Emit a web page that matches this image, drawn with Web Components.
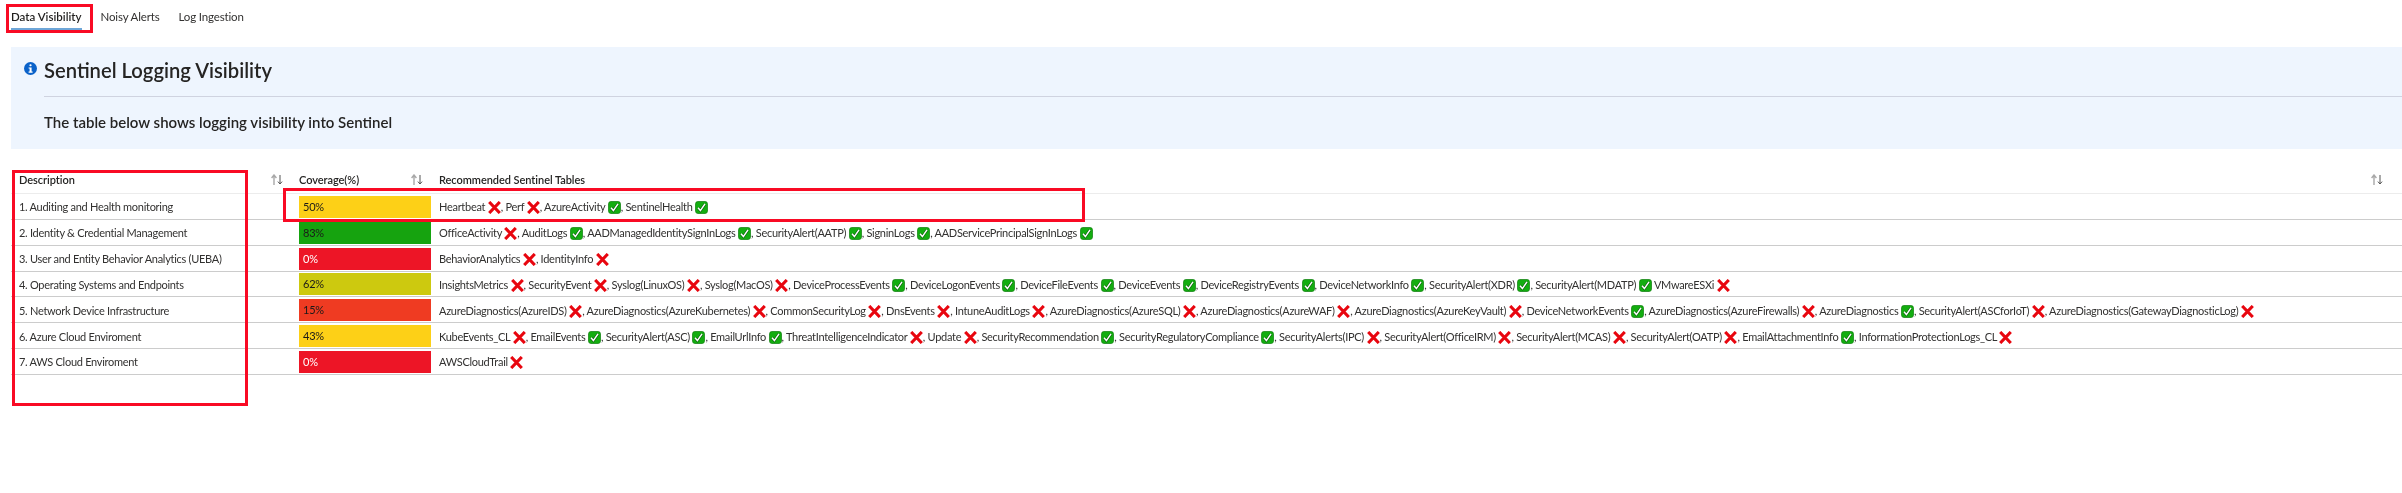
<!DOCTYPE html>
<html lang="en">
<head>
<meta charset="utf-8">
<title>Sentinel Logging Visibility</title>
<style>
  html, body { margin: 0; background: #fff; }
  body {
    position: relative;
    height: 493px;
    overflow: hidden;
    font-family: Lato, "Open Sans", sans-serif;
    color: #323130;
    filter: blur(0.35px);
  }
</style>
</head>
<body>
  <tab-bar>
    <tab-item active>Data Visibility</tab-item>
    <tab-item>Noisy Alerts</tab-item>
    <tab-item>Log Ingestion</tab-item>
  </tab-bar>

  <info-banner>
    <span slot="title">Sentinel Logging Visibility</span>
    The table below shows logging visibility into Sentinel
  </info-banner>

  <visibility-table>
    <visibility-row label="1. Auditing and Health monitoring" pct="50" color="#fdd017">Heartbeat <log-mark></log-mark>, Perf <log-mark></log-mark>, AzureActivity <log-mark ok></log-mark>, SentinelHealth <log-mark ok></log-mark></visibility-row>
    <visibility-row label="2. Identity &amp; Credential Management" pct="83" color="#16a30f">OfficeActivity <log-mark></log-mark>, AuditLogs <log-mark ok></log-mark>, AADManagedIdentitySignInLogs <log-mark ok></log-mark>, SecurityAlert(AATP) <log-mark ok></log-mark>, SigninLogs <log-mark ok></log-mark>, AADServicePrincipalSignInLogs <log-mark ok></log-mark></visibility-row>
    <visibility-row label="3. User and Entity Behavior Analytics (UEBA)" pct="0" color="#ed1526" light>BehaviorAnalytics <log-mark></log-mark>, IdentityInfo <log-mark></log-mark></visibility-row>
    <visibility-row label="4. Operating Systems and Endpoints" pct="62" color="#cdc90f">InsightsMetrics <log-mark></log-mark>, SecurityEvent <log-mark></log-mark>, Syslog(LinuxOS) <log-mark></log-mark>, Syslog(MacOS) <log-mark></log-mark>, DeviceProcessEvents <log-mark ok></log-mark>, DeviceLogonEvents <log-mark ok></log-mark>, DeviceFileEvents <log-mark ok></log-mark>, DeviceEvents <log-mark ok></log-mark>, DeviceRegistryEvents <log-mark ok></log-mark>, DeviceNetworkInfo <log-mark ok></log-mark>, SecurityAlert(XDR) <log-mark ok></log-mark>, SecurityAlert(MDATP) <log-mark ok></log-mark> VMwareESXi <log-mark></log-mark></visibility-row>
    <visibility-row label="5. Network Device Infrastructure" pct="15" color="#ef3b22">AzureDiagnostics(AzureIDS) <log-mark></log-mark>, AzureDiagnostics(AzureKubernetes) <log-mark></log-mark>, CommonSecurityLog <log-mark></log-mark>, DnsEvents <log-mark></log-mark>, IntuneAuditLogs <log-mark></log-mark>, AzureDiagnostics(AzureSQL) <log-mark></log-mark>, AzureDiagnostics(AzureWAF) <log-mark></log-mark>, AzureDiagnostics(AzureKeyVault) <log-mark></log-mark>, DeviceNetworkEvents <log-mark ok></log-mark>, AzureDiagnostics(AzureFirewalls) <log-mark></log-mark>, AzureDiagnostics <log-mark ok></log-mark>, SecurityAlert(ASCforIoT) <log-mark></log-mark>, AzureDiagnostics(GatewayDiagnosticLog) <log-mark></log-mark></visibility-row>
    <visibility-row label="6. Azure Cloud Enviroment" pct="43" color="#fdd017">KubeEvents_CL <log-mark></log-mark>, EmailEvents <log-mark ok></log-mark>, SecurityAlert(ASC) <log-mark ok></log-mark>, EmailUrlInfo <log-mark ok></log-mark>, ThreatIntelligenceIndicator <log-mark></log-mark>, Update <log-mark></log-mark>, SecurityRecommendation <log-mark ok></log-mark>, SecurityRegulatoryCompliance <log-mark ok></log-mark>, SecurityAlerts(IPC) <log-mark></log-mark>, SecurityAlert(OfficeIRM) <log-mark></log-mark>, SecurityAlert(MCAS) <log-mark></log-mark>, SecurityAlert(OATP) <log-mark></log-mark>, EmailAttachmentInfo <log-mark ok></log-mark>, InformationProtectionLogs_CL <log-mark></log-mark></visibility-row>
    <visibility-row label="7. AWS Cloud Enviroment" pct="0" color="#ed1526" light>AWSCloudTrail <log-mark></log-mark></visibility-row>
  </visibility-table>

  <red-callout style="left:6px;top:4px;width:87px;height:29px"></red-callout>
  <red-callout style="left:12px;top:170px;width:236px;height:236px"></red-callout>
  <red-callout style="left:283px;top:188px;width:802px;height:34px"></red-callout>

<script>
class TabBar extends HTMLElement {
  connectedCallback() {
    this.attachShadow({ mode: "open" });
    this.shadowRoot.innerHTML = `
      <style>
        :host { display: flex; gap: 19px; padding: 0 11px; height: 47px; align-items: flex-start; }
      </style>
      <slot></slot>
    `;
  }
}

class TabItem extends HTMLElement {
  connectedCallback() {
    this.attachShadow({ mode: "open" });
    this.shadowRoot.innerHTML = `
      <style>
        :host {
          display: block;
          font-size: 11.5px;
          letter-spacing: -0.15px;
          line-height: 17px;
          padding: 8px 0 3px;
          white-space: nowrap;
          border-bottom: 2px solid transparent;
        }
        :host([active]) {
          letter-spacing: 0;
          font-weight: 600;
          color: #201f1e;
          border-bottom-color: #6ea6d8;
        }
      </style>
      <slot></slot>
    `;
  }
}

class InfoBanner extends HTMLElement {
  connectedCallback() {
    this.attachShadow({ mode: "open" });
    this.shadowRoot.innerHTML = `
      <style>
        :host {
          display: grid;
          grid-template-columns: 33px 1fr;
          height: 102px;
          margin-left: 11px;
          background: #eef5fe;
        }
        .icon { padding: 15px 0 0 13px; }
        .icon svg { display: block; width: 13px; height: 13px; }
        .title {
          height: 50px;
          box-sizing: border-box;
          padding-top: 8px;
          border-bottom: 1px solid #cfd3e0;
          font-size: 20.2px;
          line-height: 30px;
          font-weight: 600;
          color: #252423;
        }
        .text {
          padding-top: 15px;
          font-size: 15px;
          line-height: 20px;
          font-weight: 600;
          color: #252423;
        }
      </style>
      <div class="icon">
        <svg viewBox="0 0 13 13"><circle cx="6.5" cy="6.5" r="6.5" fill="#0a62c9"/><rect x="5.4" y="2.3" width="2.2" height="2" rx="1" fill="#fff"/><path d="M4.6 5.4h3v4.2h1v1.1H4.6V9.6h1V6.5h-1z" fill="#fff"/></svg>
      </div>
      <div>
        <div class="title"><slot name="title"></slot></div>
        <div class="text"><slot></slot></div>
      </div>
    `;
  }
}

const SORT_ICON = `
  <svg viewBox="0 0 12 11" width="12" height="11" aria-hidden="true">
    <path d="M3 11V2M.6 4 3 1l2.4 3" fill="none" stroke="#a8a8a8" stroke-width="1.4"/>
    <path d="M9 1v9M6.9 7.6 9 10l2.1-2.4" fill="none" stroke="#555" stroke-width="1"/>
  </svg>`;

class VisibilityTable extends HTMLElement {
  connectedCallback() {
    this.attachShadow({ mode: "open" });
    this.shadowRoot.innerHTML = `
      <style>
        :host { display: block; margin: 18px 0 0 11px; }
        .head {
          display: grid;
          grid-template-columns: 280px 140px 1fr;
          height: 26px;
          border-bottom: 1px solid #ececec;
          font-size: 11px;
          letter-spacing: -0.05px;
          line-height: 22px;
          font-weight: 600;
          color: #252423;
        }
        .head > div {
          display: flex;
          justify-content: space-between;
          align-items: center;
          padding: 0 8px;
          white-space: nowrap;
        }
        .head > div:last-child { padding-right: 19px; }
        .head svg { margin-top: -1px; }
      </style>
      <div class="head">
        <div>Description${SORT_ICON}</div>
        <div>Coverage(%)${SORT_ICON}</div>
        <div>Recommended Sentinel Tables${SORT_ICON}</div>
      </div>
      <slot></slot>
    `;
  }
}

class VisibilityRow extends HTMLElement {
  connectedCallback() {
    const light = this.hasAttribute("light");
    this.attachShadow({ mode: "open" });
    this.shadowRoot.innerHTML = `
      <style>
        :host {
          display: grid;
          grid-template-columns: 280px 140px 1fr;
          height: 25.85px;
          box-sizing: border-box;
          border-bottom: 1px solid #cccccc;
          align-items: center;
          font-size: 11px;
          letter-spacing: -0.28px;
          white-space: nowrap;
        }
        .label { padding: 1px 8px 0; }
        .tables { padding: 2px 8px 0; letter-spacing: -0.285px; }
        .bar {
          margin: 1px 0 0 8px;
          height: 22px;
          padding-left: 4px;
          font-size: 11px;
          letter-spacing: -0.2px;
          line-height: 22px;
          color: ${light ? "#fff" : "#1b1a19"};
          background: ${this.getAttribute("color")};
        }
      </style>
      <div class="label">${this.getAttribute("label").replace("&", "&amp;")}</div>
      <div class="bar">${this.getAttribute("pct")}%</div>
      <div class="tables"><slot></slot></div>
    `;
  }
}

class LogMark extends HTMLElement {
  connectedCallback() {
    this.attachShadow({ mode: "open" });
    const icon = this.hasAttribute("ok")
      ? `<svg viewBox="0 0 13 13"><rect x=".5" y=".5" width="12" height="12" rx="2.4" fill="#13ad10" stroke="#0b7d0a" stroke-width=".7"/><path d="M3 6.8 5.4 9.6 10 2.9" fill="none" stroke="#0b5f0a" stroke-width="2.6"/><path d="M3 6.8 5.4 9.6 10 2.9" fill="none" stroke="#fff" stroke-width="1.5"/></svg>`
      : `<svg viewBox="0 0 13 13"><path d="M1.2 1 11.8 12M11.8 1 1.2 12" fill="none" stroke="#e8060f" stroke-width="3.1"/></svg>`;
    this.shadowRoot.innerHTML = `
      <style>
        :host { display: inline-block; width: 13px; height: 13px; vertical-align: -3px; }
        svg { display: block; width: 13px; height: 13px; }
      </style>
      ${icon}
    `;
  }
}

class RedCallout extends HTMLElement {
  connectedCallback() {
    this.attachShadow({ mode: "open" });
    this.shadowRoot.innerHTML = `
      <style>
        :host {
          display: block;
          position: absolute;
          box-sizing: border-box;
          border: 3px solid #f90a24;
          pointer-events: none;
        }
      </style>
    `;
  }
}

customElements.define("tab-bar", TabBar);
customElements.define("tab-item", TabItem);
customElements.define("info-banner", InfoBanner);
customElements.define("visibility-table", VisibilityTable);
customElements.define("visibility-row", VisibilityRow);
customElements.define("log-mark", LogMark);
customElements.define("red-callout", RedCallout);
</script>
</body>
</html>
